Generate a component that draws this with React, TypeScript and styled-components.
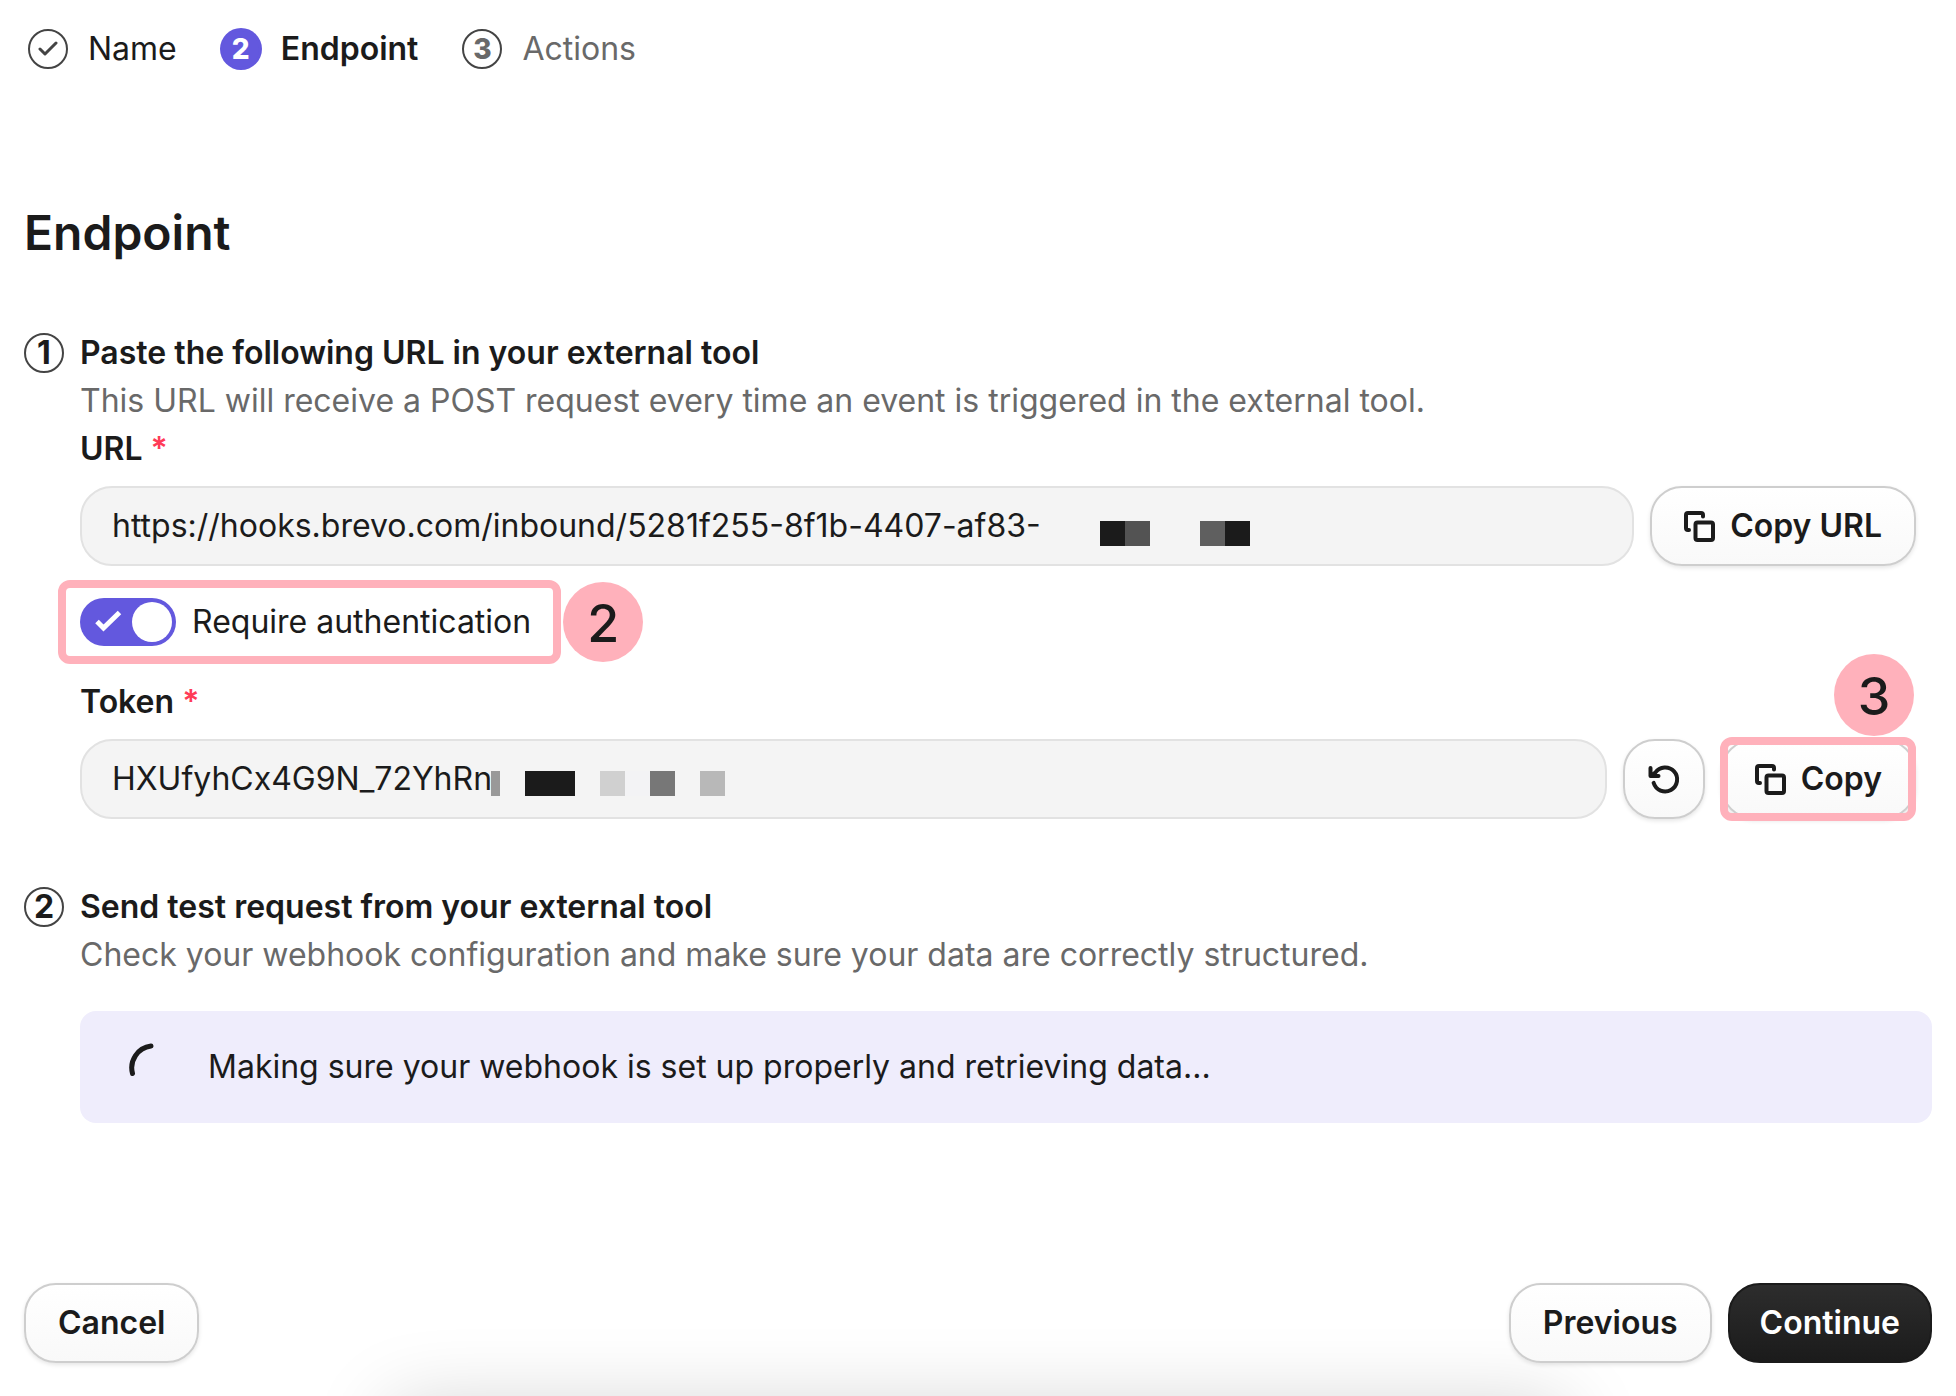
import React, { useState } from "react";
import styled, { createGlobalStyle } from "styled-components";

const ink = "#1b1b1b";
const muted = "#696969";
const violet = "#6358de";
const pink = "#ffb1bb";

const GlobalStyle = createGlobalStyle`
  *, *::before, *::after { box-sizing: border-box; }
  body {
    margin: 0;
    background: #ffffff;
    color: ${ink};
    font-family: Inter, "Liberation Sans", sans-serif;
    font-size: 32px;
    line-height: 48px;
  }
  h1, h2, p, ol { margin: 0; padding: 0; }
  button, input { font: inherit; color: inherit; }
`;

const Page = styled.div`
  position: relative;
  display: flex;
  flex-direction: column;
  min-height: 100vh;
  padding: 25px 24px 33px;
  overflow: hidden;
`;

const BottomShade = styled.div`
  position: absolute;
  left: 20%;
  right: 20%;
  bottom: -160px;
  height: 150px;
  box-shadow: 0 0 80px rgba(0, 0, 0, 0.18);
  pointer-events: none;
`;

const Stepper = styled.ol`
  display: flex;
  align-items: center;
  gap: 44px;
  padding-left: 4px;
  list-style: none;
`;

const Step = styled.li<{ $state: "done" | "current" | "next" }>`
  display: flex;
  align-items: center;
  gap: 20px;
  color: ${(p) => (p.$state === "next" ? muted : ink)};
  font-weight: ${(p) => (p.$state === "current" ? 600 : 400)};
`;

const StepMark = styled.span<{ $filled?: boolean }>`
  display: flex;
  align-items: center;
  justify-content: center;
  flex: none;
  width: 40px;
  height: 40px;
  border: 2px solid ${(p) => (p.$filled ? violet : "#444444")};
  border-radius: 50%;
  background: ${(p) => (p.$filled ? violet : "transparent")};
  box-shadow: ${(p) => (p.$filled ? `0 0 0 1px ${violet}` : "none")};
  color: ${(p) => (p.$filled ? "#ffffff" : "inherit")};
  font-size: 28px;
  font-weight: 800;
  line-height: 36px;
`;

const Title = styled.h1`
  margin-top: 128px;
  font-size: 48px;
  font-weight: 600;
  line-height: 64px;
`;

const Section = styled.section`
  display: flex;
  gap: 16px;
  margin-top: 64px;
`;

const SectionMark = styled(StepMark)`
  margin-top: 4px;
  font-size: 32px;
  font-weight: 700;
`;

const SectionBody = styled.div`
  flex: 1;
  min-width: 0;
`;

const SectionTitle = styled.h2`
  font-size: 32px;
  font-weight: 600;
  line-height: 48px;
`;

const Hint = styled.p`
  color: ${muted};
`;

const Fields = styled.div`
  display: flex;
  flex-direction: column;
  padding-right: 16px;
`;

const Label = styled.label`
  font-weight: 600;
`;

const Required = styled.span`
  color: #ff3b57;
`;

const FieldRow = styled.div`
  display: flex;
  gap: 16px;
  margin-top: 13px;
`;

const InputWrap = styled.div`
  position: relative;
  flex: 1;
  min-width: 0;
`;

const TextInput = styled.input`
  display: block;
  width: 100%;
  height: 80px;
  padding: 0 30px 2px;
  border: 2px solid #e2e2e2;
  border-radius: 32px;
  background: #f4f4f4;
  outline: none;
`;

const Mosaic = styled.div<{ $left: number; $top: number }>`
  position: absolute;
  left: ${(p) => p.$left}px;
  top: ${(p) => p.$top}px;
  display: flex;
`;

const Tile = styled.span<{ $tone: string; $width?: number }>`
  width: ${(p) => p.$width ?? 25}px;
  height: 25px;
  background: ${(p) => p.$tone};
`;

const Button = styled.button<{ $dark?: boolean; $square?: boolean }>`
  display: flex;
  align-items: center;
  justify-content: center;
  gap: 16px;
  flex: none;
  height: 80px;
  ${(p) => (p.$square ? "width: 82px;" : "")}
  padding: 0 ${(p) => (p.$square ? 0 : p.$dark ? 30 : 32)}px;
  border: 2px solid ${(p) => (p.$dark ? ink : "#cecece")};
  border-radius: 32px;
  background: ${(p) =>
    p.$dark ? "linear-gradient(#2d2d2d, #1b1b1b)" : "linear-gradient(#ffffff, #f9f9f9)"};
  box-shadow: ${(p) => (p.$dark ? "none" : "0 2px 4px rgba(0, 0, 0, 0.1)")};
  color: ${(p) => (p.$dark ? "#ffffff" : ink)};
  font-weight: 600;
  white-space: nowrap;
  cursor: pointer;
  svg { overflow: visible; }
`;

const Callout = styled.div`
  position: relative;
  display: flex;
`;

const CalloutFrame = styled.span<{ $x: number; $y: number; $right?: number }>`
  position: absolute;
  inset: ${(p) => -p.$y}px ${(p) => -(p.$right ?? p.$x)}px ${(p) => -p.$y}px ${(p) => -p.$x}px;
  border: 8px solid ${pink};
  border-radius: 12px;
  pointer-events: none;
`;

const CalloutBadge = styled.span<{ $place: "side" | "above" }>`
  position: absolute;
  ${(p) => (p.$place === "side" ? "left: calc(100% + 32px); top: -16px;" : "right: 2px; bottom: 83px;")}
  display: flex;
  align-items: center;
  justify-content: center;
  width: 80px;
  height: ${(p) => (p.$place === "side" ? 80 : 82)}px;
  padding-top: 4px;
  border-radius: 50%;
  background: ${pink};
  font-size: 52px;
  font-weight: 500;
  pointer-events: none;
`;

const SwitchRow = styled(Callout)`
  align-self: flex-start;
  margin: 32px 0;
`;

const SwitchLabel = styled.label`
  display: flex;
  align-items: center;
  gap: 16px;
  cursor: pointer;
`;

const SwitchBox = styled.span`
  position: relative;
  display: block;
  width: 96px;
  height: 48px;
`;

const SwitchInput = styled.input`
  appearance: none;
  display: block;
  width: 96px;
  height: 48px;
  margin: 0;
  padding: 4px;
  border-radius: 24px;
  background: #a0a0a0;
  cursor: pointer;
  &::before {
    content: "";
    display: block;
    width: 40px;
    height: 40px;
    border-radius: 50%;
    background: #ffffff;
  }
  &:checked { background: ${violet}; }
  &:checked::before { margin-left: 48px; }
`;

const SwitchCheck = styled.svg`
  position: absolute;
  left: 14px;
  top: 10px;
  pointer-events: none;
`;

const Banner = styled.div`
  display: flex;
  align-items: center;
  gap: 32px;
  height: 112px;
  margin-top: 32px;
  padding: 0 48px;
  border-radius: 16px;
  background: #efedfc;
`;

const Footer = styled.footer`
  position: relative;
  display: flex;
  gap: 16px;
  margin-top: auto;
`;

const Spacer = styled.span`
  flex: 1;
`;

const CopyIcon = () => (
  <svg width="30" height="30" viewBox="0 0 30 30" fill="none" stroke="currentColor" strokeWidth="4" strokeLinecap="round" strokeLinejoin="round" aria-hidden="true">
    <rect x="11.500" y="11.500" width="17.500" height="17.500" rx="2" />
    <path d="M5 19H4a2 2 0 0 1-2-2V4a2 2 0 0 1 2-2h13a2 2 0 0 1 2 2v1.500" />
  </svg>
);

const ResetIcon = () => (
  <svg width="32" height="32" viewBox="0 0 32 32" fill="none" stroke="currentColor" strokeWidth="4" strokeLinecap="round" strokeLinejoin="round" aria-hidden="true">
    <path d="M2.500 5v8h8" />
    <path d="M3 12.500L7.300 9.600A12 12 0 1 1 5.600 19.800" />
  </svg>
);

export default function App() {
  const [secure, setSecure] = useState(true);
  return (
    <>
      <GlobalStyle />
      <Page>
        <BottomShade />
        <Stepper>
          <Step $state="done">
            <StepMark>
              <svg width="20" height="18" viewBox="0 0 20 18" fill="none" stroke="#444444" strokeWidth="3" strokeLinecap="round" strokeLinejoin="round" aria-hidden="true">
                <path d="M2 9l5 5L18 3" />
              </svg>
            </StepMark>
            Name
          </Step>
          <Step $state="current" aria-current="step">
            <StepMark $filled>2</StepMark>
            Endpoint
          </Step>
          <Step $state="next">
            <StepMark>3</StepMark>
            Actions
          </Step>
        </Stepper>

        <Title>Endpoint</Title>

        <Section>
          <SectionMark>1</SectionMark>
          <SectionBody>
            <SectionTitle>Paste the following URL in your external tool</SectionTitle>
            <Hint>This URL will receive a POST request every time an event is triggered in the external tool.</Hint>
            <Fields>
              <Label htmlFor="url">
                URL <Required>*</Required>
              </Label>
              <FieldRow>
                <InputWrap>
                  <TextInput id="url" readOnly value="https://hooks.brevo.com/inbound/5281f255-8f1b-4407-af83-" />
                  <Mosaic $left={1020} $top={35}>
                    <Tile $tone="#1b1b1b" />
                    <Tile $tone="#535353" />
                    <Tile $tone="transparent" $width={50} />
                    <Tile $tone="#5f5f5f" />
                    <Tile $tone="#1b1b1b" />
                  </Mosaic>
                </InputWrap>
                <Button type="button">
                  <CopyIcon />
                  Copy URL
                </Button>
              </FieldRow>

              <SwitchRow>
                <SwitchLabel>
                  <SwitchBox>
                    <SwitchInput type="checkbox" role="switch" checked={secure} onChange={(e) => setSecure(e.target.checked)} />
                    {secure && (
                      <SwitchCheck width="30" height="28" viewBox="0 0 30 28" fill="none" stroke="#ffffff" strokeWidth="5" aria-hidden="true">
                        <path d="M3 13.500l6.500 6.500L25.500 4.500" />
                      </SwitchCheck>
                    )}
                  </SwitchBox>
                  Require authentication
                </SwitchLabel>
                <CalloutFrame $x={22} $y={18} $right={30} />
                <CalloutBadge $place="side">2</CalloutBadge>
              </SwitchRow>

              <Label htmlFor="token">
                Token <Required>*</Required>
              </Label>
              <FieldRow>
                <InputWrap>
                  <TextInput id="token" readOnly value="HXUfyhCx4G9N_72YhRn" />
                  <Mosaic $left={411} $top={32}>
                    <Tile $tone="#999999" $width={9} />
                    <Tile $tone="transparent" />
                    <Tile $tone="#1b1b1b" $width={50} />
                    <Tile $tone="transparent" />
                    <Tile $tone="#d0d0d0" />
                    <Tile $tone="#f3f3f5" />
                    <Tile $tone="#777777" />
                    <Tile $tone="transparent" />
                    <Tile $tone="#b8b8b8" />
                  </Mosaic>
                </InputWrap>
                <Button type="button" $square aria-label="Regenerate token">
                  <ResetIcon />
                </Button>
                <Callout>
                  <Button type="button">
                    <CopyIcon />
                    Copy
                  </Button>
                  <CalloutFrame $x={1} $y={2} $right={0} />
                  <CalloutBadge $place="above">3</CalloutBadge>
                </Callout>
              </FieldRow>
            </Fields>
          </SectionBody>
        </Section>

        <Section>
          <SectionMark>2</SectionMark>
          <SectionBody>
            <SectionTitle>Send test request from your external tool</SectionTitle>
            <Hint>Check your webhook configuration and make sure your data are correctly structured.</Hint>
            <Banner role="status">
              <svg width="48" height="48" viewBox="0 0 48 48" fill="none" stroke={ink} strokeWidth="5" strokeLinecap="round" aria-hidden="true">
                <path d="M23 3A22 22 0 0 0 4.500 30.500" />
              </svg>
              Making sure your webhook is set up properly and retrieving data...
            </Banner>
          </SectionBody>
        </Section>

        <Footer>
          <Button type="button">Cancel</Button>
          <Spacer />
          <Button type="button">Previous</Button>
          <Button type="button" $dark>
            Continue
          </Button>
        </Footer>
      </Page>
    </>
  );
}
